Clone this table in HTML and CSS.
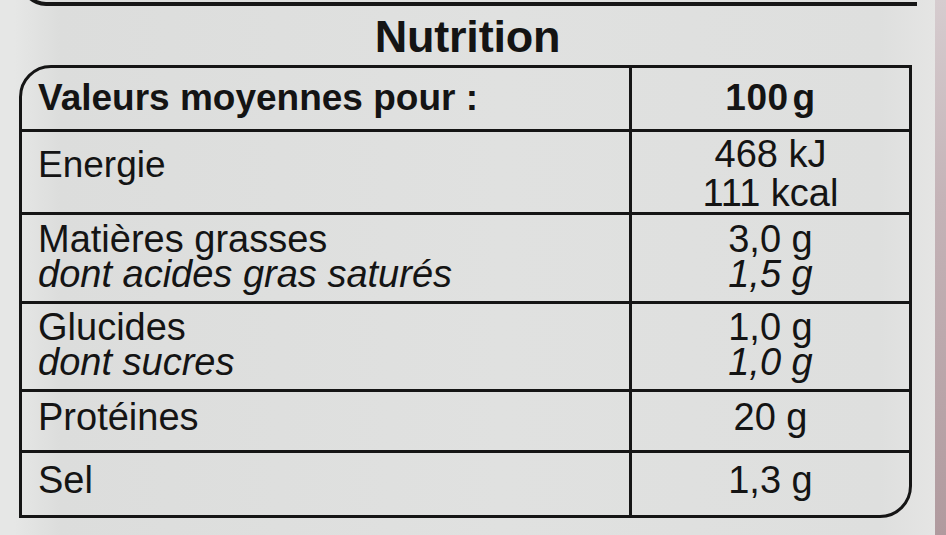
FILE: index.html
```html
<!DOCTYPE html>
<html lang="fr">
<head>
<meta charset="utf-8">
<title>Nutrition</title>
<link rel="stylesheet" href="styles.css">
</head>
<body>
<div class="page">
  <div class="main">
    <div class="prev"></div>
    <h1 class="title">Nutrition</h1>
    <div class="table">
      <div class="row r1">
        <div class="lab bold">Valeurs moyennes pour :</div>
        <div class="val bold">100<span class="g">g</span></div>
      </div>
      <div class="row r2">
        <div class="lab">Energie</div>
        <div class="val"><div class="ln">468 kJ</div><div class="ln">111 kcal</div></div>
      </div>
      <div class="row r3">
        <div class="lab"><div class="ln">Matières grasses</div><div class="ln it">dont acides gras saturés</div></div>
        <div class="val"><div class="ln">3,0 g</div><div class="ln it">1,5 g</div></div>
      </div>
      <div class="row r4">
        <div class="lab"><div class="ln">Glucides</div><div class="ln it">dont sucres</div></div>
        <div class="val"><div class="ln">1,0 g</div><div class="ln it">1,0 g</div></div>
      </div>
      <div class="row r5">
        <div class="lab">Protéines</div>
        <div class="val">20 g</div>
      </div>
      <div class="row r6">
        <div class="lab">Sel</div>
        <div class="val">1,3 g</div>
      </div>
    </div>
  </div>
  <div class="edge"></div>
</div>
</body>
</html>
```
FILE: styles.css
```css
html, body {
  margin: 0;
  padding: 0;
}
body {
  width: 946px;
  height: 535px;
  overflow: hidden;
  background: #dfe0df;
  font-family: "Liberation Sans", Arial, sans-serif;
  color: #141414;
}
.page {
  display: flex;
  height: 535px;
}
.main {
  width: 935px;
  height: 535px;
  background: linear-gradient(to right, #e6e7e6 0, #e6e7e6 14px, #dcdddc 60px, #e0e1e0 500px, #dedfde 880px, #e5e5e4 935px);
  overflow: hidden;
}
.edge {
  flex: 1;
  background: linear-gradient(to bottom, #d6cccf 0, #c4b3b7 200px, #b09a9e 535px);
}
.prev {
  box-sizing: border-box;
  height: 30px;
  margin-top: -24px;
  margin-left: 20px;
  width: 897px;
  border-left: 4px solid #161616;
  border-bottom: 4px solid #161616;
  border-bottom-left-radius: 26px;
}
.title {
  margin: 9px 0 0 19px;
  width: 894px;
  text-align: center;
  font-size: 45px;
  line-height: 44px;
  font-weight: bold;
  letter-spacing: -0.2px;
  padding-left: 3px;
  box-sizing: border-box;
}
.table {
  box-sizing: border-box;
  margin: 6px 0 0 19px;
  width: 893px;
  border: 3px solid #151515;
  border-radius: 32px 0 32px 0;
  overflow: hidden;
}
.row {
  display: grid;
  grid-template-columns: 607px 1fr;
  box-sizing: border-box;
  border-top: 3px solid #151515;
}
.row.r1 { border-top: none; height: 61px; }
.row.r2 { height: 83px; }
.row.r3 { height: 89px; }
.row.r4 { height: 88px; }
.row.r5 { height: 61px; }
.row.r6 { height: 65px; }

.lab, .val {
  font-size: 38px;
  line-height: 35px;
  white-space: nowrap;
}
.ln {
  height: 35px;
}
.it {
  font-style: italic;
}
.lab {
  padding-left: 16px;
}
.val {
  border-left: 3px solid #151515;
  text-align: center;
}
.bold {
  font-weight: bold;
  font-size: 37px;
  line-height: 38px;
}
.g {
  margin-left: 4px;
}
.r1 .lab { padding-top: 11px; }
.r1 .val { padding-top: 11px; letter-spacing: 0.5px; }
.r2 .lab { padding-top: 14px; line-height: 38px; font-size: 37px; }
.r2 .val { padding-top: 3px; line-height: 39px; }
.r2 .val .ln { height: 39px; }
.r3 .lab, .r3 .val { padding-top: 7px; }
.r4 .lab, .r4 .val { padding-top: 6px; }
.r5 .lab, .r5 .val { padding-top: 6px; line-height: 38px; }
.r6 .lab, .r6 .val { padding-top: 8px; line-height: 38px; }
```
